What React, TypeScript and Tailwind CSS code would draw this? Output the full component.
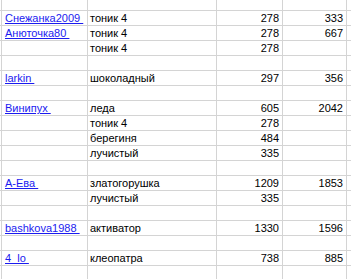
const rows: [string, string, string, string][] = [
  ["Снежанка2009 ", "тоник 4", "278", "333"],
  ["Анюточка80 ", "тоник 4", "278", "667"],
  ["", "тоник 4", "278", ""],
  ["", "", "", ""],
  ["larkin ", "шоколадный", "297", "356"],
  ["", "", "", ""],
  ["Винипух ", "леда", "605", "2042"],
  ["", "тоник 4", "278", ""],
  ["", "берегиня", "484", ""],
  ["", "лучистый", "335", ""],
  ["", "", "", ""],
  ["А-Ева ", "златогорушка", "1209", "1853"],
  ["", "лучистый", "335", ""],
  ["", "", "", ""],
  ["bashkova1988 ", "активатор", "1330", "1596"],
  ["", "", "", ""],
  ["4_lo ", "клеопатра", "738", "885"],
  ["", "", "", ""],
];

function Row({ cells, top }: { cells?: [string, string, string, string]; top?: boolean }) {
  const h = top ? "h-[11px]" : "h-[15px]";
  const [name, item, a, b] = cells ?? ["", "", "", ""];
  return (
    <div className={`flex ${h} border-b border-[#d4d4d4]`}>
      <div className="w-[2px] shrink-0 border-r border-[#d4d4d4]" />
      <div className="w-[86px] shrink-0 border-r border-[#d4d4d4] flex items-end pl-[3px] pb-[1px] whitespace-pre">
        {name && <span className="underline text-[#1b1bf0] leading-none">{name}</span>}
      </div>
      <div className="w-[129px] shrink-0 border-r border-[#d4d4d4] flex items-end pl-[2px] pb-[1px] whitespace-pre">
        <span className="leading-none">{item}</span>
      </div>
      <div className="w-[66px] shrink-0 border-r border-[#d4d4d4] flex items-end justify-end pr-[3px] pb-[1px]">
        <span className="leading-none">{a}</span>
      </div>
      <div className="w-[64px] shrink-0 border-r border-[#d4d4d4] flex items-end justify-end pr-[3px] pb-[1px]">
        <span className="leading-none">{b}</span>
      </div>
      <div className="flex-1" />
    </div>
  );
}

export default function App() {
  return (
    <div className="w-[351px] h-[279px] overflow-hidden bg-white text-black text-[11px] font-['Liberation_Sans',Arial,sans-serif]">
      <Row top />
      {rows.map((r, i) => (
        <Row key={i} cells={r} />
      ))}
    </div>
  );
}
